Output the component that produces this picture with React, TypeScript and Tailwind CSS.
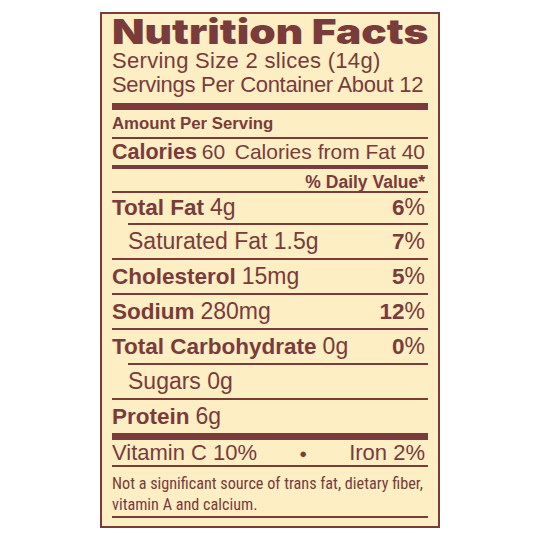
import clsx from "clsx"

type Nutrient = {
  label: string
  amount: string
  pct?: string
  indent?: boolean
}

const nutrients: Nutrient[] = [
  { label: "Total Fat", amount: "4g", pct: "6" },
  { label: "Saturated Fat", amount: "1.5g", pct: "7", indent: true },
  { label: "Cholesterol", amount: "15mg", pct: "5" },
  { label: "Sodium", amount: "280mg", pct: "12" },
  { label: "Total Carbohydrate", amount: "0g", pct: "0" },
  { label: "Sugars", amount: "0g", indent: true },
  { label: "Protein", amount: "6g" },
]

function Rule({ indent, className }: { indent?: boolean; className?: string }) {
  return <div className={clsx("h-[1.5px] shrink-0 bg-[#7a3b3b]", indent && "ml-4", className)} />
}

function NutrientRow({ item, first }: { item: Nutrient; first?: boolean }) {
  return (
    <div
      className={clsx(
        "flex items-center justify-between pr-[3px]",
        first ? "h-[30.5px]" : "h-[33.5px]",
        item.indent && "pl-4"
      )}
    >
      <div className="flex items-baseline gap-[6px]">
        {!item.indent && <span className="text-[22.5px] font-bold leading-none">{item.label}</span>}
        <span className="text-[23px] leading-none">
          {item.indent ? `${item.label} ${item.amount}` : item.amount}
        </span>
      </div>
      {item.pct && (
        <div className="flex items-baseline">
          <span className="text-[22.5px] font-bold leading-none">{item.pct}</span>
          <span className="text-[23px] leading-none">%</span>
        </div>
      )}
    </div>
  )
}

export default function App() {
  return (
    <div className="w-[540px] h-[540px] bg-white pt-3 pl-[100px] font-['Liberation_Sans',Arial,sans-serif]">
      <div className="flex h-[516px] w-[340px] flex-col border-2 border-[#7a3b3b] bg-[#fdeec3] px-[10px] text-[#7a3b3b]">
        <h1 className="h-[35px] shrink-0 pt-[3px] font-['Inter',sans-serif] text-[34px] font-black leading-[30px]">
          <span className="inline-block origin-left scale-x-[1.245]">Nutrition Facts</span>
        </h1>
        <p className="text-[22px] leading-[24px] tracking-[0.3px]">Serving Size 2 slices (14g)</p>
        <p className="whitespace-nowrap text-[22px] leading-[24px] tracking-[-0.3px]">Servings Per Container About 12</p>
        <div className="mt-[6px] h-[7px] shrink-0 bg-[#7a3b3b]" />
        <div className="h-[27px] shrink-0 text-[16.8px] font-bold leading-[27px]">Amount Per Serving</div>
        <Rule />
        <div className="flex h-[26.5px] shrink-0 items-center justify-between pr-[3px] text-[21px]">
          <div className="flex items-baseline gap-[5px]">
            <span className="text-[21.5px] font-bold leading-none">Calories</span>
            <span className="leading-none">60</span>
          </div>
          <span className="leading-none">Calories from Fat 40</span>
        </div>
        <div className="h-[4px] shrink-0 bg-[#7a3b3b]" />
        <div className="h-[22px] shrink-0 pt-[2px] pr-[3px] text-right text-[17.5px] font-bold leading-[22px]">
          % Daily Value*
        </div>
        <Rule />
        {nutrients.map((item, i) => (
          <div key={item.label} className="shrink-0">
            <NutrientRow item={item} first={i === 0} />
            {i < nutrients.length - 1 && <Rule indent={i === 0 || i === 4} />}
          </div>
        ))}
        <div className="h-[7px] shrink-0 bg-[#7a3b3b]" />
        <div className="flex h-[25px] shrink-0 items-center justify-between pr-[3px] pt-[1px] text-[22px] leading-none">
          <span>Vitamin C 10%</span>
          <span className="text-[13px]">●</span>
          <span>Iron 2%</span>
        </div>
        <Rule />
        <p className="whitespace-nowrap pt-[6.5px] font-['Roboto_Condensed',sans-serif] text-[16.2px] leading-[21px]">
          Not a significant source of trans fat, dietary fiber,
          <br />
          vitamin A and calcium.
        </p>
        <Rule className="mt-[1px]" />
      </div>
    </div>
  )
}
